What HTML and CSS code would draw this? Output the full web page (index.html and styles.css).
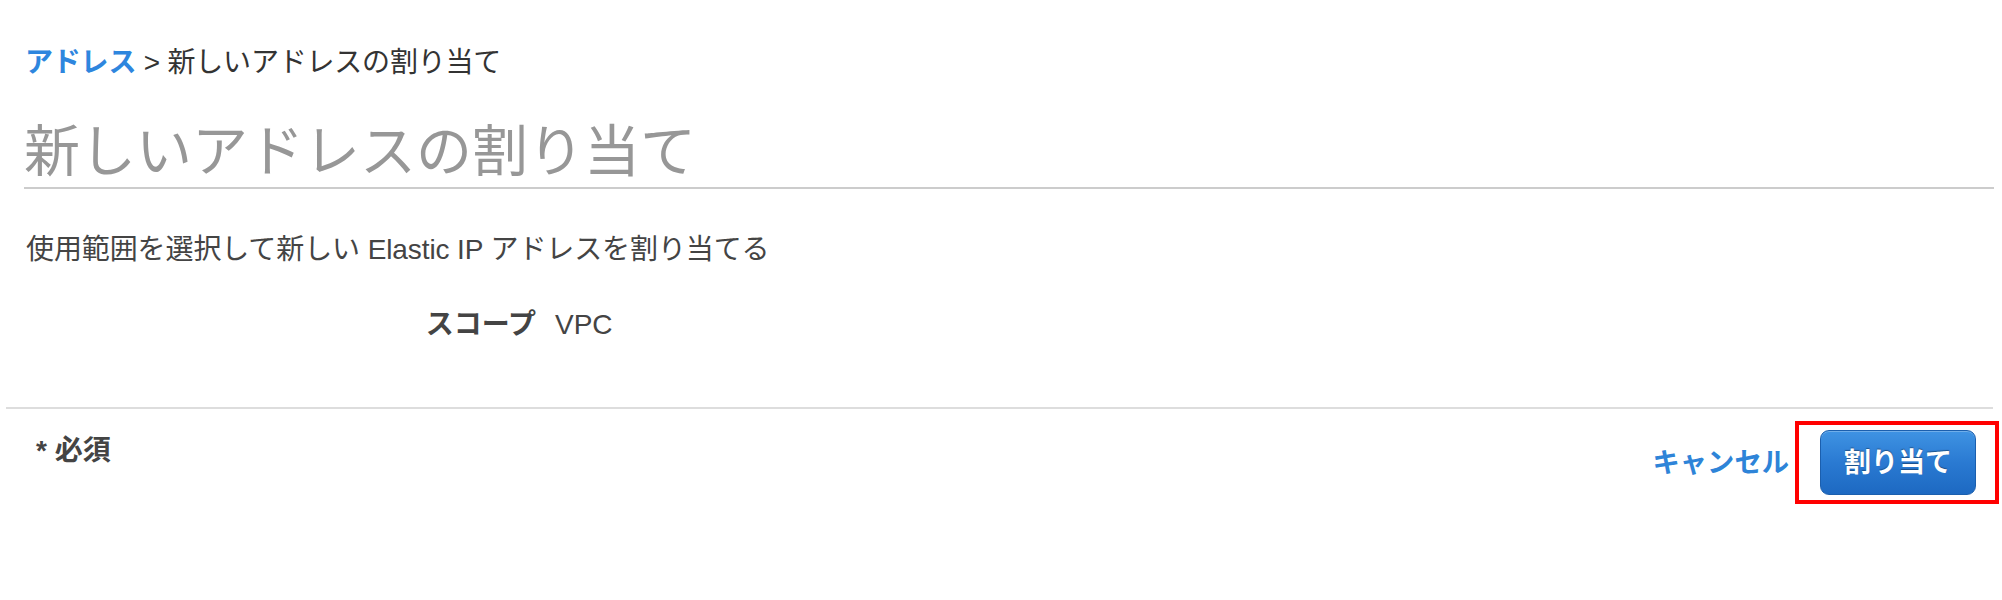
FILE: index.html
```html
<!DOCTYPE html>
<html lang="ja">
<head>
<meta charset="utf-8">
<title>新しいアドレスの割り当て</title>
<link rel="stylesheet" href="styles.css">
</head>
<body>
<div class="page">
  <div class="header">
    <nav class="breadcrumb"><a class="crumb-link" href="#">アドレス</a> &gt; 新しいアドレスの割り当て</nav>
    <h1 class="title">新しいアドレスの割り当て</h1>
    <p class="desc">使用範囲を選択して新しい Elastic IP アドレスを割り当てる</p>
    <div class="field">
      <span class="field-label">スコープ</span>
      <span class="field-value">VPC</span>
    </div>
  </div>
  <div class="footer-line"></div>
  <div class="footer">
    <span class="required">* 必須</span>
    <div class="actions">
      <a class="cancel" href="#">キャンセル</a>
      <span class="highlight"><button class="btn" type="button">割り当て</button></span>
    </div>
  </div>
</div>
</body>
</html>
```

FILE: styles.css
```css
html, body {
  margin: 0;
  padding: 0;
  background: #ffffff;
}

body {
  font-family: "Liberation Sans", "Noto Sans CJK JP", sans-serif;
  color: #444444;
}

.page {
  width: 2002px;
  padding-top: 46px;
}

.header {
  padding: 0 8px 0 24px;
}

.breadcrumb {
  font-size: 28px;
  letter-spacing: -0.2px;
  line-height: 34px;
  color: #333333;
  padding-left: 1px;
}

.crumb-link {
  color: #2e86de;
  font-weight: bold;
  text-decoration: none;
}

.title {
  margin: 37px 0 0 0;
  font-size: 56px;
  font-weight: normal;
  line-height: 70px;
  color: #979797;
  border-bottom: 2px solid #cccccc;
}

.desc {
  margin: 44px 0 0 0;
  padding-left: 2px;
  font-size: 28px;
  letter-spacing: -0.1px;
  line-height: 34px;
  color: #444444;
}

.field {
  display: flex;
  margin-top: 41px;
  line-height: 34px;
}

.field-label {
  width: 512px;
  text-align: right;
  font-size: 28px;
  font-weight: bold;
  color: #444444;
}

.field-value {
  margin-left: 19px;
  font-size: 28px;
  color: #444444;
}

.footer-line {
  height: 2px;
  background: #dddddd;
  margin: 65px 9px 0 6px;
}

.footer {
  display: flex;
  justify-content: space-between;
  align-items: flex-start;
  margin-top: 21px;
  padding: 0 26px 40px 36px;
}

.required {
  margin-top: 4px;
  font-size: 28px;
  line-height: 34px;
  font-weight: bold;
  color: #444444;
}

.actions {
  display: flex;
  align-items: center;
  gap: 31px;
}

.cancel {
  font-size: 27.3px;
  line-height: 34px;
  font-weight: bold;
  color: #2e84d8;
  text-decoration: none;
}

.highlight {
  position: relative;
  display: block;
}

.highlight::after {
  content: "";
  position: absolute;
  top: -9px;
  bottom: -9px;
  left: -25px;
  right: -23px;
  border: 4px solid #ff0000;
  pointer-events: none;
}

.btn {
  display: block;
  width: 156px;
  height: 65px;
  padding: 0;
  border: 1px solid #1b5fae;
  border-radius: 9px;
  background: linear-gradient(#3f93e3, #2a7ad2 50%, #1d69c2);
  box-shadow: inset 0 1px 0 rgba(255, 255, 255, 0.25);
  color: #ffffff;
  font-family: "Liberation Sans", "Noto Sans CJK JP", sans-serif;
  font-size: 27px;
  font-weight: bold;
  line-height: 34px;
  text-shadow: 0 -1px 1px rgba(0, 0, 0, 0.35);
}
```
